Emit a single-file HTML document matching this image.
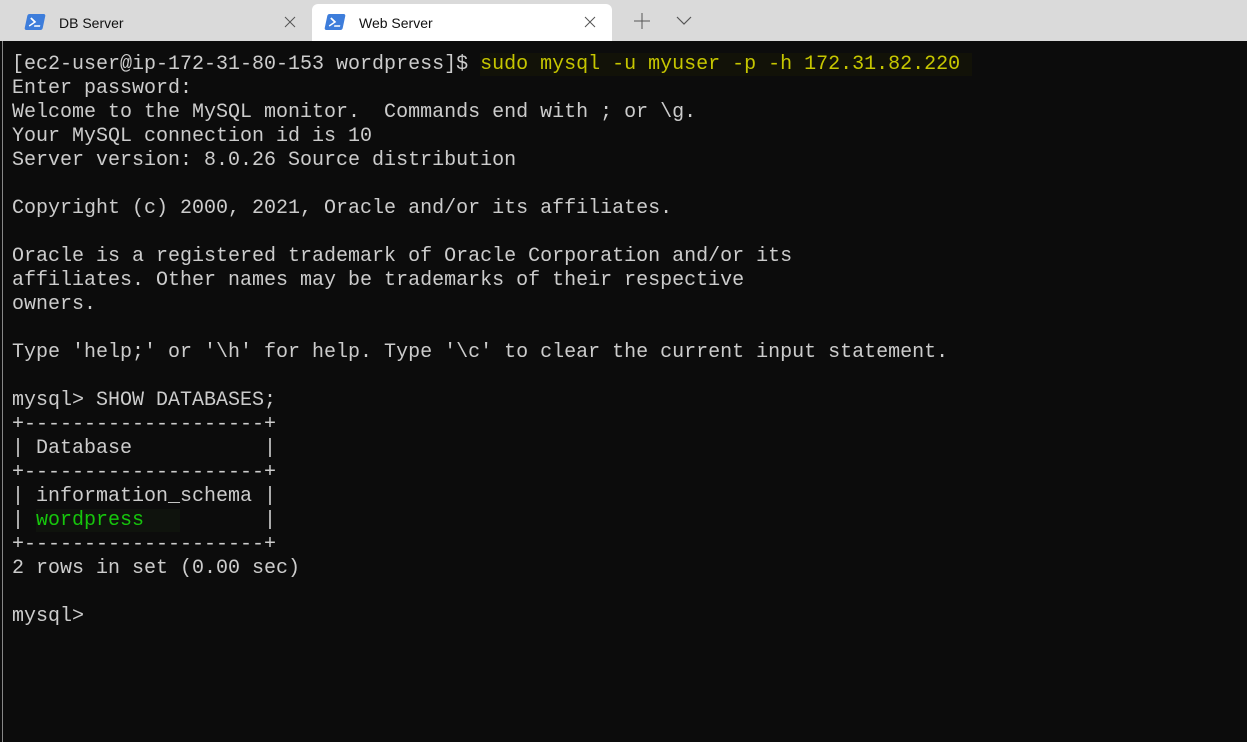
<!DOCTYPE html>
<html><head><style>
html,body{margin:0;padding:0;width:1247px;height:742px;overflow:hidden;background:#0c0c0c}
.bar{position:absolute;left:0;top:0;width:1247px;height:41px;background:#dadada}
.tab{position:absolute;top:4px;height:37px;font:14px "Liberation Sans",sans-serif;color:#111}
.tab .ic{position:absolute;left:14px;top:10px;width:18px;height:16px;background:#3d7ddb;transform:skewX(-12deg);border-radius:2px}
.tab .ic svg{position:absolute;left:2px;top:2px}
.tab .t{position:absolute;left:47px;top:11px}
.tab .x{position:absolute;top:12px}
.term{position:absolute;left:2px;top:41px;right:0;bottom:0;background:#0c0c0c;border-left:1px solid #888}
pre{margin:0;position:absolute;left:9px;top:12px;font:20px/24px "Liberation Mono",monospace;color:#cccccc}
.y{color:#c6c600;background:#121208}.g{color:#16c60c;background:#0f130d}
</style></head><body>
<div class="bar">
 <div class="tab" style="left:12px;width:298px"><div class="ic"><svg width="14" height="12"><path d="M2 2l5 4-5 4M7 10h6" stroke="#fff" stroke-width="1.6" fill="none"/></svg></div><span class="t">DB Server</span><svg class="x" style="left:272px" width="12" height="12"><path d="M1 1l10 10M11 1L1 11" stroke="#555" stroke-width="1"/></svg></div>
 <div class="tab" style="left:312px;width:300px;background:#fff;border-radius:6px 6px 0 0"><div class="ic"><svg width="14" height="12"><path d="M2 2l5 4-5 4M7 10h6" stroke="#fff" stroke-width="1.6" fill="none"/></svg></div><span class="t">Web Server</span><svg class="x" style="left:272px" width="12" height="12"><path d="M1 1l10 10M11 1L1 11" stroke="#555" stroke-width="1"/></svg></div>
 <svg style="position:absolute;left:634px;top:13px" width="16" height="16"><path d="M8 0v16M0 8h16" stroke="#555" stroke-width="1"/></svg>
 <svg style="position:absolute;left:676px;top:16px" width="16" height="10"><path d="M1 1l7 7 7-7" stroke="#555" stroke-width="1.2" fill="none"/></svg>
</div>
<div class="term"><pre>[ec2-user@ip-172-31-80-153 wordpress]$ <span class="y">sudo mysql -u myuser -p -h 172.31.82.220 </span>
Enter password:
Welcome to the MySQL monitor.  Commands end with ; or \g.
Your MySQL connection id is 10
Server version: 8.0.26 Source distribution

Copyright (c) 2000, 2021, Oracle and/or its affiliates.

Oracle is a registered trademark of Oracle Corporation and/or its
affiliates. Other names may be trademarks of their respective
owners.

Type 'help;' or '\h' for help. Type '\c' to clear the current input statement.

mysql> SHOW DATABASES;
+--------------------+
| Database           |
+--------------------+
| information_schema |
| <span class="g">wordpress   </span>       |
+--------------------+
2 rows in set (0.00 sec)

mysql> </pre></div>
</body></html>
